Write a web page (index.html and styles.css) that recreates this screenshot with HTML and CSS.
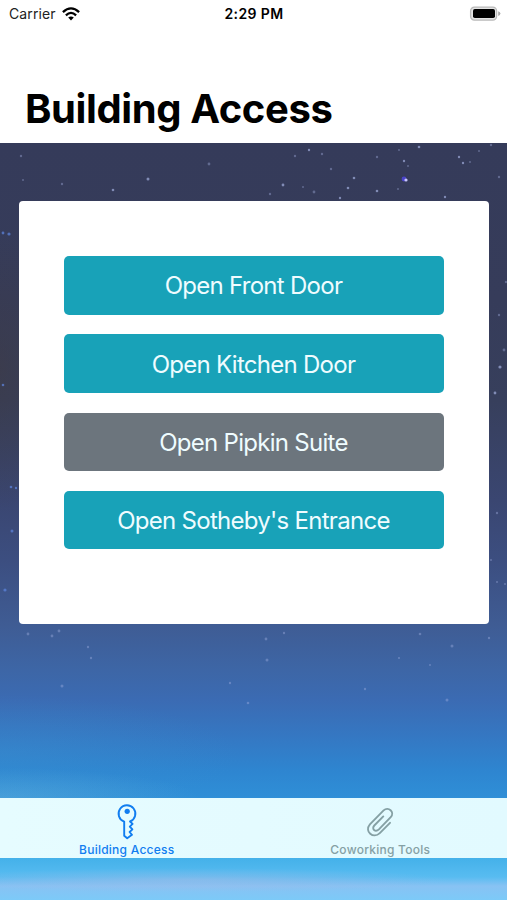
FILE: index.html
```
<!DOCTYPE html>
<html lang="en">
<head>
    <meta charset="UTF-8">
    <meta name="viewport" content="width=device-width, initial-scale=1.0">
    <link rel="stylesheet" href="styles.css">
    <title>Building Access</title>
</head>
<body>
    <div class="app">
        <!-- stars on the night sky -->
        <svg class="stars" viewBox="0 0 507 900" fill="#a9b6e6">
            <g opacity=".65">
                <circle cx="148" cy="179" r="1.5"/>
                <circle cx="113" cy="190" r="1.3"/>
                <circle cx="283" cy="185" r="1.4"/>
                <circle cx="348" cy="188" r="1.3"/>
                <circle cx="377" cy="191" r="1.3"/>
                <circle cx="354" cy="178" r="1.3"/>
                <circle cx="340" cy="198" r="1.2"/>
                <circle cx="419" cy="147" r="1.3"/>
                <circle cx="500" cy="367" r="1.6"/>
                <circle cx="495" cy="393" r="1.4"/>
                <circle cx="309" cy="150" r="1.2"/>
                <circle cx="459" cy="157" r="1.2"/>
                <circle cx="463" cy="163" r="1.2"/>
                <circle cx="404" cy="161" r="1.2"/>
                <circle cx="445" cy="197" r="1.2"/>
            </g>
            <g opacity=".38">
                <circle cx="21" cy="156" r="1.2"/>
                <circle cx="62" cy="184" r="1.2"/>
                <circle cx="23" cy="180" r="1"/>
                <circle cx="209" cy="164" r="1.4"/>
                <circle cx="270" cy="194" r="1.2"/>
                <circle cx="303" cy="187" r="1"/>
                <circle cx="314" cy="192" r="1.4"/>
                <circle cx="295" cy="156" r="1.2"/>
                <circle cx="322" cy="154" r="1.2"/>
                <circle cx="331" cy="169" r="1.2"/>
                <circle cx="377" cy="157" r="1.2"/>
                <circle cx="399" cy="150" r="1"/>
                <circle cx="408" cy="166" r="1"/>
                <circle cx="398" cy="189" r="1"/>
                <circle cx="479" cy="151" r="1"/>
                <circle cx="470" cy="162" r="1"/>
                <circle cx="491" cy="145" r="1.2"/>
                <circle cx="499" cy="177" r="1.2"/>
                <circle cx="499" cy="315" r="1.2"/>
                <circle cx="504" cy="350" r="1.4"/>
                <circle cx="506" cy="282" r="1.2"/>
                <circle cx="497" cy="513" r="1.2"/>
                <circle cx="491" cy="560" r="1"/>
                <circle cx="497" cy="582" r="1"/>
                <circle cx="505" cy="584" r="1"/>
                <circle cx="28" cy="634" r="1.4"/>
                <circle cx="52" cy="636" r="1.4"/>
                <circle cx="59" cy="631" r="1.4"/>
                <circle cx="88" cy="647" r="1.2"/>
                <circle cx="91" cy="658" r="1.2"/>
                <circle cx="266" cy="639" r="1.4"/>
                <circle cx="267" cy="660" r="1.5"/>
                <circle cx="284" cy="633" r="1.2"/>
                <circle cx="420" cy="634" r="1.3"/>
                <circle cx="452" cy="646" r="1.5"/>
                <circle cx="489" cy="638" r="1.2"/>
                <circle cx="399" cy="658" r="1.1"/>
                <circle cx="430" cy="665" r="1"/>
                <circle cx="62" cy="686" r="1.5"/>
                <circle cx="230" cy="683" r="1.2"/>
                <circle cx="248" cy="703" r="1.3"/>
                <circle cx="365" cy="689" r="1.2"/>
                <circle cx="447" cy="700" r="1.5"/>
            </g>
            <g fill="#5f86e0" opacity=".7">
                <circle cx="3" cy="233" r="1.4"/>
                <circle cx="9" cy="234" r="1.6"/>
                <circle cx="3" cy="385" r="1.3"/>
                <circle cx="11" cy="487" r="1.3"/>
                <circle cx="16" cy="488" r="1.2"/>
                <circle cx="12" cy="531" r="1.5"/>
                <circle cx="5" cy="590" r="1.6"/>
            </g>
            <circle cx="404" cy="179" r="2.4" fill="#4b45c8"/>
            <circle cx="406" cy="180" r="1.6" fill="#c9c6ff"/>
        </svg>

        <header class="header">
            <div class="status">
                <div class="carrier">
                    <span class="carrierName">Carrier</span>
                    <svg class="wifi" viewBox="0 0 18 14" width="18" height="14">
                        <g fill="none" stroke="#000" stroke-width="2.3">
                            <path d="M0.9 5.1 Q9 -2.3 17.1 5.1"/>
                            <path d="M3.9 8.3 Q9 3.5 14.1 8.3"/>
                        </g>
                        <path d="M6.2 10.6 Q9 8.3 11.8 10.6 L9 13.6 Z"/>
                    </svg>
                </div>
                <span class="time">2:29 PM</span>
                <svg class="battery" viewBox="0 0 32 16" width="32" height="16">
                    <rect x="1.6" y="1.1" width="26" height="13" rx="3.8" fill="#e4e4e4" stroke="#b9b9b9" stroke-width="1.3"/>
                    <rect x="4" y="3.1" width="22" height="9" rx="1.8"/>
                    <path d="M29.2 5.3 Q31.4 6 31.4 7.6 Q31.4 9.2 29.2 9.9 Z" fill="#a8a8a8"/>
                </svg>
            </div>
            <h1 class="title">Building Access</h1>
        </header>

        <main class="content">
            <div class="card">
                <button class="btn front">Open Front Door</button>
                <button class="btn kitchen">Open Kitchen Door</button>
                <button class="btn btnGray pipkin">Open Pipkin Suite</button>
                <button class="btn entrance">Open Sotheby's Entrance</button>
            </div>
        </main>

        <nav class="tabs">
            <a class="tab active">
                <svg class="tabIcon" viewBox="0 0 36 36" width="36" height="36" fill="none" stroke="currentColor" stroke-width="1.9" stroke-linejoin="round">
                    <path d="M15.2 17.6 A8.4 8.4 0 1 1 21 17.5 L23.6 19.9 L20.8 22.6 L23.4 25.4 L20.6 28 L23 30.8 L18.2 34.3 L15.2 31.8 Z"/>
                    <circle cx="18.2" cy="7.3" r="2.6" fill="currentColor" stroke="none"/>
                </svg>
                <span class="tabLabel">Building Access</span>
            </a>
            <a class="tab">
                <svg class="tabIcon" viewBox="0 0 36 36" width="36" height="36" fill="none" stroke="currentColor" stroke-width="1.9" stroke-linecap="round">
                    <path d="M28 18.8 L17.8 29.1 C11.4 35.3 2 27.5 7.9 20.4 L21.6 6.4 C26.3 1.9 33.2 8.1 28.7 13.2 L16.9 25.4 C13.3 28.7 9.2 25 12.3 21.5 L21.3 12.4"/>
                </svg>
                <span class="tabLabel">Coworking Tools</span>
            </a>
        </nav>
    </div>
</body>
</html>
```

FILE: styles.css
```
*{
    box-sizing: border-box;
}
body{
    margin: 0;
    font-family: Inter, "Liberation Sans", sans-serif;
}
.app{
    position: relative;
    display: flex;
    flex-direction: column;
    height: 900px;
    overflow: hidden;
    background:
        radial-gradient(ellipse 200px 30px at 0 798px, rgba(95,175,220,0.5), transparent),
        radial-gradient(ellipse 240px 60px at 0 755px, rgba(60,150,210,0.3), transparent),
        radial-gradient(ellipse 260px 12px at 190px 880px, rgba(165,185,230,0.5), transparent),
        radial-gradient(ellipse 60px 140px at 0 370px, rgba(62,58,66,0.55), transparent),
        linear-gradient(#353b5a 142px, #363c5a 300px, #373f5c 400px, #3a4671 500px, #3c4e80 560px, #3f5c94 625px, #3d66a6 670px, #3b6bb3 700px, #3577c2 735px, #2e85d0 770px, #2f8fd7 798px, #46b2ea 860px, #58bcf1 877px, #88c2f3 886px, #7ccaf8 900px);
}
.stars{
    position: absolute;
    top: 0;
    left: 0;
    width: 507px;
    height: 900px;
}
/*header*/
.header{
    position: relative;
    height: 142.5px;
    background: #fff;
}
.status{
    display: grid;
    grid-template-columns: 1fr auto 1fr;
    align-items: center;
    height: 27px;
    padding: 0 6px 0 9px;
    font-size: 14px;
}
.carrier{
    display: flex;
    align-items: center;
    gap: 6px;
}
.carrierName{
    letter-spacing: 0.1px;
    color: #222;
}
.time{
    margin-right: 2px;
    font-weight: 600;
    letter-spacing: 0.4px;
}
.battery{
    justify-self: end;
}
.title{
    margin: 56px 0 0 25px;
    font-size: 40px;
    line-height: 52px;
    font-weight: 700;
    letter-spacing: -0.4px;
    white-space: nowrap;
}
/*buttons card*/
.content{
    position: relative;
    flex: 1;
    padding: 58.7px 18.4px 0 19.3px;
}
.card{
    display: flex;
    flex-direction: column;
    gap: 19.7px;
    height: 422.5px;
    padding: 55px 45px;
    background: #fff;
    border-radius: 4px;
}
.btn{
    height: 58.5px;
    padding: 1px 1px 0 0;
    border: none;
    border-radius: 5px;
    background: #18a2b8;
    color: #effcff;
    font-family: inherit;
    font-size: 24px;
    letter-spacing: -0.72px;
    cursor: pointer;
}
.btnGray{
    background: #6c757d;
}
/*bottom tabs*/
.tabs{
    position: relative;
    display: flex;
    height: 60px;
    margin-bottom: 42px;
    background: linear-gradient(90deg, #e6fcff, #e2faff);
}
.tab{
    flex: 1;
    display: flex;
    flex-direction: column;
    align-items: center;
    padding-top: 6px;
    color: #85a0a4;
}
.active{
    color: #117df0;
}
.tabIcon{
    flex-shrink: 0;
}
.tabLabel{
    margin-top: 1.5px;
    font-size: 12px;
    line-height: 16px;
    font-weight: 500;
    letter-spacing: 0.25px;
}
```
